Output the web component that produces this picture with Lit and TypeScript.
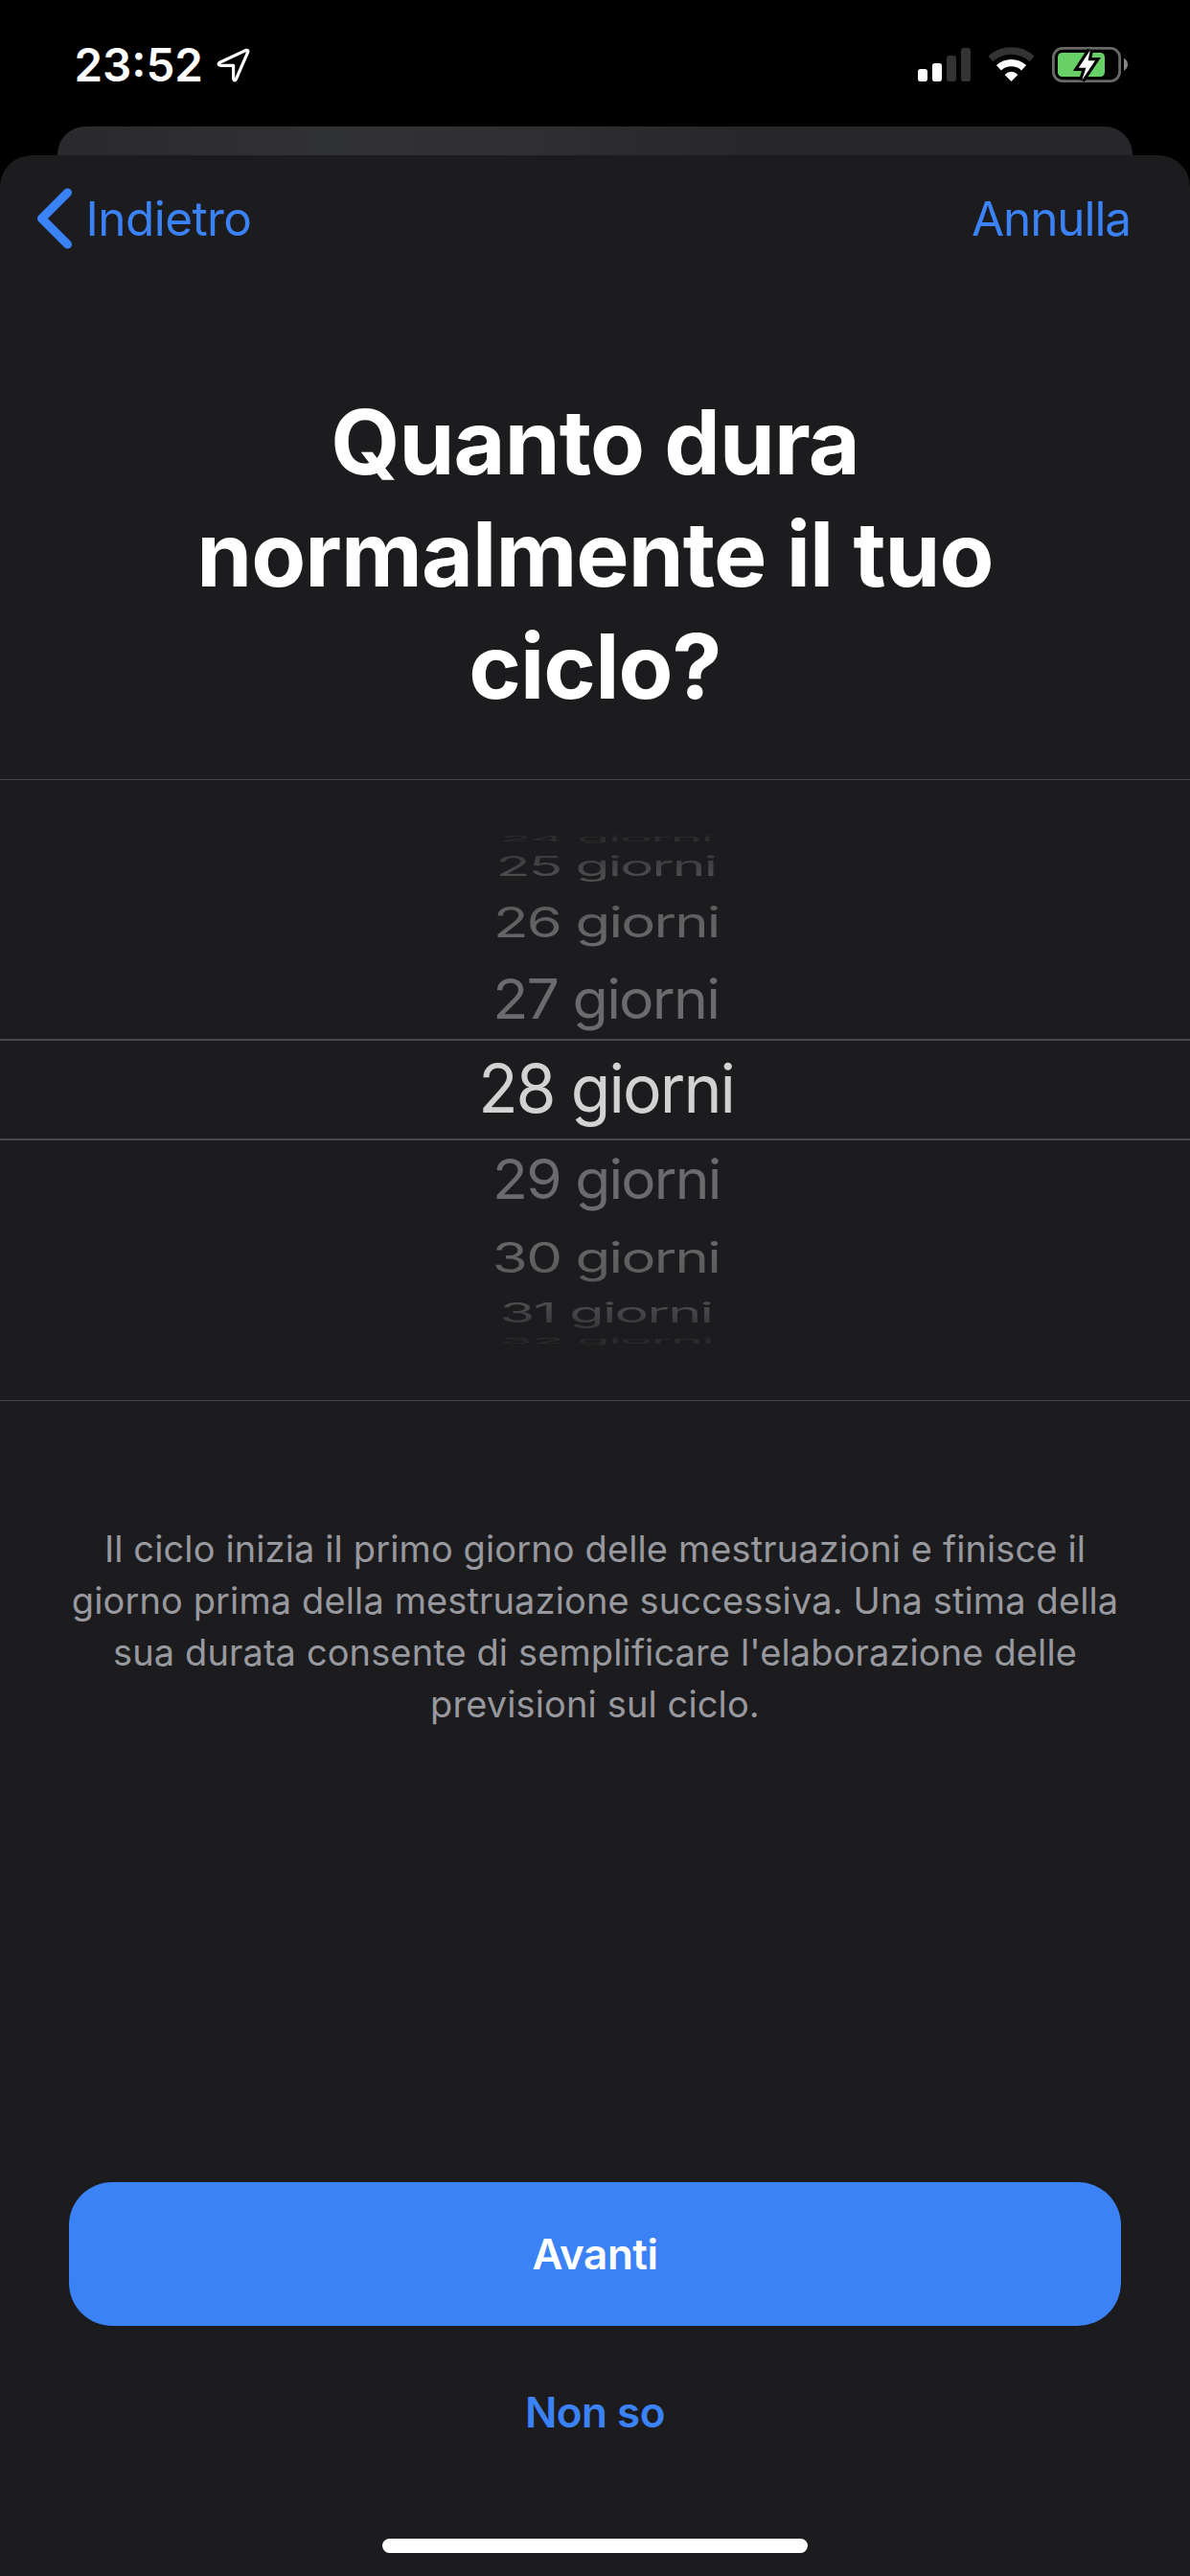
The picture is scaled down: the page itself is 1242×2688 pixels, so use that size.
import { LitElement, html, css } from "lit";
import { customElement } from "lit/decorators.js";

interface WheelRow {
  label: string;
  height: number;
  scaleX: number;
  scaleY: number;
}

// Rows shrink vertically as they turn away from the centre of the drum.
const ROWS: WheelRow[] = [
  { label: "24 giorni", height: 20.8, scaleX: 0.912, scaleY: 0.125 },
  { label: "25 giorni", height: 37.6, scaleX: 0.945, scaleY: 0.45 },
  { label: "26 giorni", height: 78.4, scaleX: 0.967, scaleY: 0.715 },
  { label: "27 giorni", height: 82.6, scaleX: 0.982, scaleY: 0.926 },
  { label: "28 giorni", height: 106, scaleX: 0.977, scaleY: 1 },
  { label: "29 giorni", height: 82.6, scaleX: 0.975, scaleY: 0.926 },
  { label: "30 giorni", height: 78.4, scaleX: 0.969, scaleY: 0.715 },
  { label: "31 giorni", height: 37.6, scaleX: 0.96, scaleY: 0.45 },
  { label: "32 giorni", height: 20.8, scaleX: 0.916, scaleY: 0.125 },
];
const SELECTED = 4;

@customElement("status-bar")
export class StatusBar extends LitElement {
  static styles = css`
    :host {
      display: flex;
      justify-content: space-between;
      align-items: flex-start;
      height: 132px;
      padding: 0 65px 0 77.5px;
      box-sizing: border-box;
      color: #fff;
    }
    .left {
      display: flex;
      align-items: center;
      height: 136px;
    }
    .time {
      font-size: 47.5px;
      font-weight: 600;
      line-height: 60px;
      width: 147.5px;
      white-space: nowrap;
    }
    svg {
      display: block;
    }
    .right {
      padding-top: 44px;
    }
  `;

  render() {
    return html`
      <div class="left">
        <span class="time">23:52</span>
        <svg width="38" height="40" viewBox="225 49 38 40" fill="none">
          <path
            d="M257.2 53.3 229.3 66.2Q226.6 68.6 230 69.3H243.6V83Q244.6 86.6 246.4 83.6L258.9 54.9Q259 53 257.2 53.3Z"
            stroke="#fff"
            stroke-width="3.2"
            stroke-linejoin="round"
          />
        </svg>
      </div>
      <svg class="right" width="222" height="46" viewBox="955 44 222 46" fill="none">
        <rect x="958" y="72" width="10" height="13" rx="2.8" fill="#fff" />
        <rect x="973" y="66" width="10" height="19" rx="2.8" fill="#fff" />
        <rect x="988" y="58" width="10" height="27" rx="2.8" fill="#333" />
        <rect x="1003" y="50" width="10" height="35" rx="2.8" fill="#333" />
        <path d="M1033.8 61.5A32 32 0 0 1 1077.2 61.5" stroke="#333" stroke-width="7.4" />
        <path d="M1042.4 70.8A19.3 19.3 0 0 1 1068.6 70.8" stroke="#fff" stroke-width="7.4" />
        <path d="M1055.5 85 1048.6 77.9Q1055.5 71.4 1062.4 77.9Z" fill="#fff" />
        <rect x="1099.4" y="50.4" width="69.2" height="34.2" rx="9.6" stroke="#686868" stroke-width="2.8" />
        <path d="M1173 60.8Q1177 63 1177 67.3T1173 73.8Z" fill="#868686" />
        <rect x="1104" y="55" width="49" height="25" rx="4.6" fill="#67d067" />
        <path
          d="M1137.8 52.5 1125.8 70.8H1133.4L1129.2 83.8 1143 63.2H1135.6Z"
          fill="#fff"
          stroke="#000"
          stroke-width="6.4"
          paint-order="stroke"
        />
      </svg>
    `;
  }
}

@customElement("day-wheel")
export class DayWheel extends LitElement {
  static styles = css`
    :host {
      display: flex;
      flex-direction: column;
      justify-content: center;
      height: 649px;
      padding-bottom: 1px;
      box-sizing: border-box;
      border-top: 1px solid #48484a;
      border-bottom: 1px solid #48484a;
    }
    .row {
      display: flex;
      flex: none;
      align-items: center;
      justify-content: center;
      padding-left: 23px;
      box-sizing: border-box;
      font-size: 62px;
      letter-spacing: -1.8px;
      line-height: 1;
      white-space: nowrap;
      color: #6b6b6d;
    }
    .selected {
      font-size: 69.5px;
      letter-spacing: -2px;
      color: #d2d2d2;
      border-top: 2px solid #48484a;
      border-bottom: 2px solid #48484a;
    }
    .before {
      -webkit-mask-image: linear-gradient(#0003 10px, #0006 28px, #0009 48px, #000c 78px, #000e 110px, #000 130px);
      mask-image: linear-gradient(#0003 10px, #0006 28px, #0009 48px, #000c 78px, #000e 110px, #000 130px);
    }
    .after {
      -webkit-mask-image: linear-gradient(to top, #0003 10px, #0006 28px, #0009 48px, #000c 78px, #000e 110px, #000 130px);
      mask-image: linear-gradient(to top, #0003 10px, #0006 28px, #0009 48px, #000c 78px, #000e 110px, #000 130px);
    }
  `;

  private row(r: WheelRow, selected = false) {
    return html`<div class="row ${selected ? "selected" : ""}" style="height:${r.height}px">
      <span style="transform:scale(${r.scaleX},${r.scaleY})">${r.label}</span>
    </div>`;
  }

  render() {
    return html`
      <div class="before">${ROWS.slice(0, SELECTED).map((r) => this.row(r))}</div>
      ${this.row(ROWS[SELECTED], true)}
      <div class="after">${ROWS.slice(SELECTED + 1).map((r) => this.row(r))}</div>
    `;
  }
}

@customElement("app-root")
export class AppRoot extends LitElement {
  static styles = css`
    :host {
      display: flex;
      flex-direction: column;
      width: 1242px;
      height: 2688px;
      background: #000;
      color: #fff;
      font-family: Inter, "Liberation Sans", sans-serif;
      overflow: hidden;
    }
    .behind {
      flex: none;
      height: 30px;
      margin: 0 60px;
      border-radius: 29px 29px 0 0;
      background: linear-gradient(90deg, #2a2a2c, #303133 25%, #303032 42%, #272729 65%, #27272b);
    }
    .sheet {
      flex: 1;
      display: flex;
      flex-direction: column;
      background: #1c1c1e;
      border-radius: 33px 33px 0 0;
    }
    .nav {
      display: flex;
      justify-content: space-between;
      align-items: center;
      height: 132px;
      padding: 0 62px 0 36px;
      font-size: 49.5px;
      letter-spacing: -1.1px;
      color: #3b82f7;
    }
    .back {
      display: flex;
      align-items: center;
      gap: 11.5px;
      letter-spacing: -0.55px;
    }
    .title {
      margin: 109px 180px 0;
      font-size: 93px;
      font-weight: 700;
      letter-spacing: -0.9px;
      line-height: 117px;
      text-align: center;
      white-space: nowrap;
    }
    .wheel {
      margin-top: 59px;
    }
    .note {
      margin: 127px 0 0;
      font-size: 38px;
      letter-spacing: 0.12px;
      line-height: 54px;
      text-align: center;
      white-space: nowrap;
      color: #98989f;
    }
    .actions {
      display: flex;
      flex-direction: column;
      align-items: center;
      margin-top: auto;
    }
    .primary {
      align-self: stretch;
      height: 150px;
      margin: 0 72px;
      border-radius: 45px;
      background: #3b82f7;
      font-size: 44px;
      font-weight: 600;
      letter-spacing: -0.45px;
      line-height: 150px;
      text-align: center;
    }
    .secondary {
      margin-top: 60px;
      font-size: 44px;
      font-weight: 600;
      letter-spacing: -0.5px;
      line-height: 60px;
      color: #3b82f7;
    }
    .home {
      width: 444px;
      height: 15px;
      margin: 102px 0 24px;
      border-radius: 8px;
      background: #fff;
    }
  `;

  render() {
    return html`
      <status-bar></status-bar>
      <div class="behind"></div>
      <main class="sheet">
        <nav class="nav">
          <span class="back">
            <svg width="42" height="66" viewBox="36 195.5 42 66" fill="none">
              <path
                d="M70.5 201.5 43.5 228.5 70.5 255.5"
                stroke="#3b82f7"
                stroke-width="9"
                stroke-linecap="round"
                stroke-linejoin="round"
              />
            </svg>
            <span>Indietro</span>
          </span>
          <span>Annulla</span>
        </nav>
        <div class="title">Quanto dura<br />normalmente il tuo<br />ciclo?</div>
        <day-wheel class="wheel"></day-wheel>
        <div class="note">
          Il ciclo inizia il primo giorno delle mestruazioni e finisce il<br />giorno prima della mestruazione
          successiva. Una stima della<br />sua durata consente di semplificare l'elaborazione delle<br />previsioni
          sul ciclo.
        </div>
        <div class="actions">
          <div class="primary">Avanti</div>
          <div class="secondary">Non so</div>
          <div class="home"></div>
        </div>
      </main>
    `;
  }
}
